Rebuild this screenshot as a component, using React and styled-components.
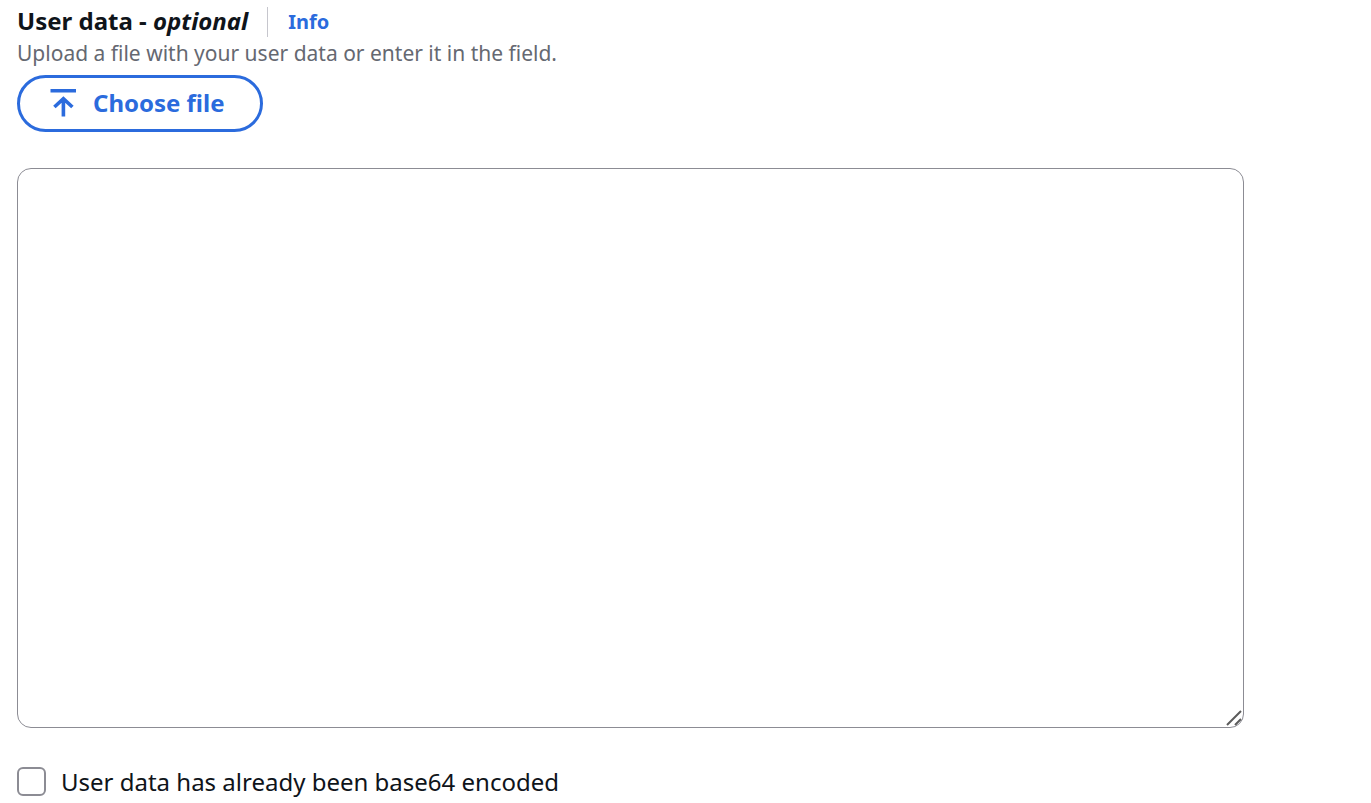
import { useRef, useState } from "react";
import styled, { createGlobalStyle } from "styled-components";

export default function App() {
  const [userData, setUserData] = useState("");
  const [encoded, setEncoded] = useState(false);
  const fileInput = useRef(null);

  async function loadFile(event) {
    const file = event.target.files[0];
    if (file) {
      setUserData(await file.text());
    }
  }

  return (
    <>
      <GlobalStyle />
      <Container>
        <Header>
          <Label htmlFor="user-data">
            User data - <em>optional</em>
          </Label>
          <InfoLink href="#info">Info</InfoLink>
        </Header>
        <Description id="user-data-description">
          Upload a file with your user data or enter it in the field.
        </Description>
        <UploadButton type="button" onClick={() => fileInput.current.click()}>
          <UploadIcon viewBox="0 0 28 28" aria-hidden="true">
            <path d="M1.5 1.6h25.5M14.4 27.5V10M5.4 18l9-8.4 9 8.4" />
          </UploadIcon>
          Choose file
        </UploadButton>
        <input
          ref={fileInput}
          type="file"
          aria-label="Choose file"
          hidden
          onChange={loadFile}
        />
        <Field>
          <TextArea
            id="user-data"
            aria-describedby="user-data-description"
            value={userData}
            onChange={(e) => setUserData(e.target.value)}
          />
          <Grip viewBox="0 0 16 16" aria-hidden="true">
            <path d="M1 15L15 1M9 15l6-6" />
          </Grip>
        </Field>
        <CheckLabel>
          <Checkbox
            type="checkbox"
            checked={encoded}
            onChange={(e) => setEncoded(e.target.checked)}
          />
          User data has already been base64 encoded
        </CheckLabel>
      </Container>
    </>
  );
}

const GlobalStyle = createGlobalStyle`
  * {
    box-sizing: border-box;
  }
  body {
    margin: 0;
    background: #ffffff;
    color: #0f141a;
    font-family: "Noto Sans", sans-serif;
  }
`;

const Container = styled.main`
  display: flex;
  flex-direction: column;
  align-items: flex-start;
  padding: 5px 127px 0 17px;
`;

const Header = styled.div`
  display: flex;
  align-items: flex-end;
  height: 32px;
`;

const Label = styled.label`
  padding-right: 19px;
  font-size: 24px;
  font-weight: 700;
  line-height: 32px;
`;

const InfoLink = styled.a`
  padding-left: 20px;
  border-left: 1px solid #c6c6cd;
  color: #2b6bdd;
  font-size: 20px;
  font-weight: 700;
  line-height: 30px;
  text-decoration: none;
`;

const Description = styled.p`
  margin: 0;
  color: #656871;
  font-size: 21px;
  line-height: 32px;
`;

const UploadButton = styled.button`
  display: flex;
  align-items: center;
  gap: 16px;
  height: 57px;
  margin-top: 6px;
  padding: 0 35px 2px 29px;
  border: 3px solid #2b6bdd;
  border-radius: 29px;
  background: #ffffff;
  color: #2b6bdd;
  font-family: inherit;
  font-size: 24px;
  font-weight: 700;
  line-height: 32px;
  cursor: pointer;
`;

const UploadIcon = styled.svg`
  width: 28px;
  height: 28px;
  fill: none;
  stroke: #2b6bdd;
  stroke-width: 3.6;
`;

const Field = styled.div`
  position: relative;
  width: 100%;
  margin-top: 36px;
`;

const TextArea = styled.textarea`
  display: block;
  width: 100%;
  height: 560px;
  padding: 12px 24px;
  border: 1px solid #8c8c94;
  border-radius: 14px;
  outline: none;
  background: #ffffff;
  color: inherit;
  font-family: inherit;
  font-size: 24px;
  line-height: 32px;
  resize: vertical;

  &::-webkit-resizer {
    background: transparent;
  }
`;

const Grip = styled.svg`
  position: absolute;
  right: 2px;
  bottom: 2px;
  width: 16px;
  height: 16px;
  fill: none;
  stroke: #5c5c5c;
  stroke-width: 2;
  pointer-events: none;
`;

const CheckLabel = styled.label`
  display: flex;
  align-items: center;
  gap: 15px;
  margin-top: 37px;
  font-size: 24px;
  line-height: 33px;
`;

const Checkbox = styled.input`
  width: 29px;
  height: 29px;
  margin: 0;
  border: 2px solid #8c8c94;
  border-radius: 6px;
  background: #ffffff;
  appearance: none;

  &:checked {
    border-color: #2b6bdd;
    background: #2b6bdd;
  }
`;
